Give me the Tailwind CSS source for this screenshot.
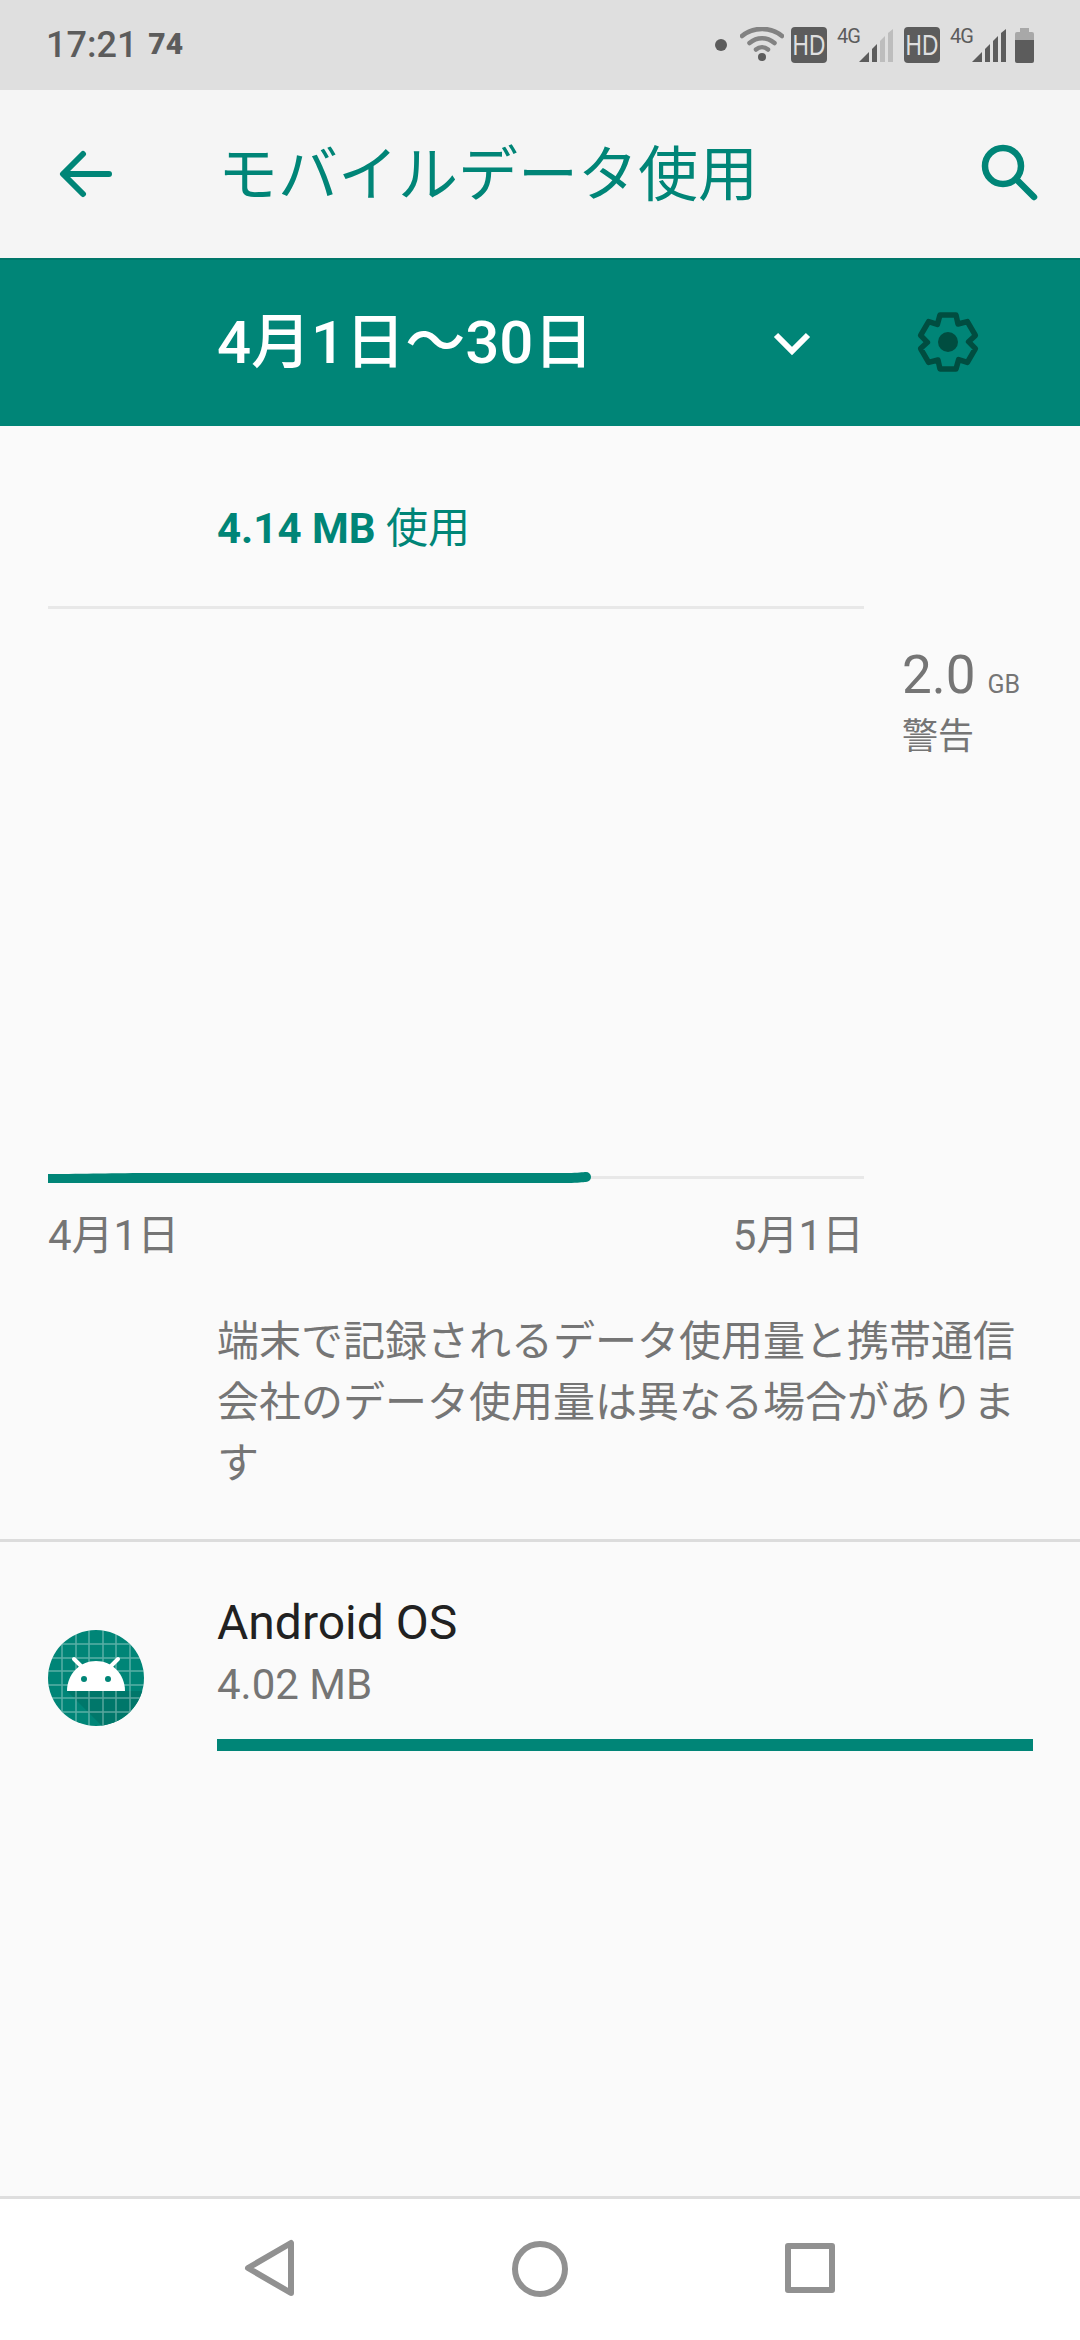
<!DOCTYPE html>
<html lang="ja"><head><meta charset="utf-8">
<script src="https://cdn.jsdelivr.net/npm/@tailwindcss/browser@4"></script>
</head>
<body class="m-0">
<div class="w-[1080px] h-[2340px] flex flex-col overflow-hidden bg-[#fafafa] font-['Roboto','Noto_Sans_CJK_JP',sans-serif]">
  <!-- status bar -->
  <div class="h-[90px] shrink-0 bg-[#dfdfdf] flex items-center pl-[46px] text-[#5c5c5c]">
    <span class="text-[36px] leading-none font-medium">17:21</span>
    <span class="ml-[11px] mt-[-2px] text-[30px] leading-none font-black">74</span>
    <div class="ml-auto mr-[46px] flex items-center h-[36px]">
      <svg width="12" height="12" viewBox="0 0 12 12" class="mr-[13px]"><circle cx="6" cy="6" r="6" fill="#5c5c5c"/></svg>
      <svg width="44" height="36" viewBox="0 0 44 36" class="mr-[7px]" fill="none" stroke="#828282" stroke-width="4.500" stroke-linecap="round"><path d="M2 9C13-.5 31-.5 42 9"/><path d="M9.500 16C17 9.500 27 9.500 34.500 16"/><path d="M16 22.500C19.500 19.500 24.500 19.500 28 22.500"/><circle cx="22" cy="30" r="4" fill="#5c5c5c" stroke="none"/></svg>
      <div class="w-[36px] h-[36px] rounded-[4px] bg-[#5c5c5c] text-[#dfdfdf] text-[29px] leading-[36px] flex justify-center overflow-hidden font-['Liberation_Sans',sans-serif]"><span class="inline-block scale-x-[0.78]">HD</span></div>
      <div class="self-start w-[22px] ml-[10px] text-[20px] leading-[20px] mt-[-1px] tracking-[-1px]">4G</div>
      <svg width="34" height="34" viewBox="0 0 34 34" class="mt-[1px]"><path d="M0 33 10 23V33Z" fill="#5c5c5c"/><path d="M13 20 18 15V33H13Z" fill="#5c5c5c"/><path d="M21 12 26 7V33H21Z" fill="#bdbdbd"/><path d="M29 4 34 0V33H29Z" fill="#bdbdbd"/></svg>
      <div class="ml-[11px] w-[36px] h-[36px] rounded-[4px] bg-[#5c5c5c] text-[#dfdfdf] text-[29px] leading-[36px] flex justify-center overflow-hidden font-['Liberation_Sans',sans-serif]"><span class="inline-block scale-x-[0.78]">HD</span></div>
      <div class="self-start w-[22px] ml-[10px] text-[20px] leading-[20px] mt-[-1px] tracking-[-1px]">4G</div>
      <svg width="34" height="34" viewBox="0 0 34 34" class="mt-[1px]"><path d="M0 33 10 23V33Z" fill="#5c5c5c"/><path d="M13 20 18 15V33H13Z" fill="#5c5c5c"/><path d="M21 12 26 7V33H21Z" fill="#5c5c5c"/><path d="M29 4 34 0V33H29Z" fill="#5c5c5c"/></svg>
      <svg width="19" height="35" viewBox="0 0 19 35" class="ml-[9px]"><path d="M5 0H14V4H17Q19 4 19 6V12H0V6Q0 4 2 4H5Z" fill="#a8a8a8"/><path d="M0 12H19V33Q19 35 17 35H2Q0 35 0 33Z" fill="#5c5c5c"/></svg>
    </div>
  </div>
  <!-- app bar -->
  <div class="h-[168px] shrink-0 bg-[#f5f5f5] flex items-center relative">
    <svg width="54" height="48" viewBox="0 0 54 48" class="ml-[59px]" fill="none" stroke="#008577" stroke-width="6" stroke-linecap="round" stroke-linejoin="round"><path d="M50 24H5"/><path d="M24 4 4 24 24 44"/></svg>
    <span class="ml-[105px] mt-[4px] text-[#008577] text-[60px] leading-none">モバイルデータ使用</span>
    <svg width="58" height="58" viewBox="0 0 58 58" class="ml-auto mr-[41px] mt-[-2px]" fill="none" stroke="#008577" stroke-width="6.500" stroke-linecap="round"><circle cx="22" cy="22" r="18"/><path d="M36 36 53 53"/></svg>
  </div>
  <!-- green period bar -->
  <div class="h-[168px] shrink-0 bg-[#008577] flex items-center relative border-t-2 border-[#00776a]">
    <span class="ml-[217px] text-white text-[60px] font-medium leading-none">4月1日〜30日</span>
    <svg width="38" height="24" viewBox="0 0 38 24" class="absolute left-[773px] top-[72px]" fill="none" stroke="#fff" stroke-width="6"><path d="M3 3 19 19 35 3"/></svg>
    <svg width="64" height="64" viewBox="-32 -32 64 64" class="absolute left-[916px] top-[50px]"><path d="M-8-27H8L10-18L19.380-20.430L27.380-6.570L20.590-.34L27.380 6.570L19.380 20.430L10.590 17.660L8 27H-8L-10 18L-19.380 20.430L-27.380 6.570L-20.590 .34L-27.380-6.570L-19.380-20.430L-10.590-17.660Z" fill="none" stroke="#004d40" stroke-width="5.500" stroke-linejoin="round"/><circle r="10" fill="#004d40"/></svg>
  </div>
  <!-- summary -->
  <div class="h-[180px] shrink-0 pl-[217px] pt-[80px] text-[#008577] text-[42px] leading-[46px]"><span class="font-bold">4.14 MB</span> <span>使用</span></div>
  <!-- chart -->
  <div class="h-[573px] shrink-0 flex pl-[48px] relative">
    <div class="w-[816px] border-y-[3px] border-[#e8e8e8]"></div>
    <div class="ml-[38px] pt-[40px] text-[#757575]">
      <div class="leading-[58px]"><span class="text-[53px]">2.0</span><span class="text-[25px] ml-[12px]">GB</span></div>
      <div class="text-[36px] leading-[44px] mt-[-2px]">警告</div>
    </div>
    <svg width="545" height="14" viewBox="0 0 545 14" class="absolute left-[48px] top-[564px]"><path d="M0 4C40 4 60 3 110 3H520C530 3 535 2 538 2A5 5 0 0 1 538 12C535 12 530 13 520 13H100C60 13 40 13 0 13Z" fill="#008577"/></svg>
  </div>
  <!-- date axis -->
  <div class="h-[94px] shrink-0 w-[864px] pl-[48px] flex justify-between items-center pt-[20px] text-[#757575] text-[42px] leading-none">
    <span>4月1日</span><span>5月1日</span>
  </div>
  <!-- note -->
  <div class="shrink-0 pl-[217px] pr-[40px] pt-[38px] text-[#757575] text-[42px] leading-[61px] h-[269px] border-b-[3px] border-[#dcdcdc]">端末で記録されるデータ使用量と携帯通信会社のデータ使用量は異なる場合がありま<br>す</div>
  <!-- app row -->
  <div class="flex-1 flex pl-[48px] pt-[53px]">
    <svg width="96" height="96" viewBox="0 0 96 96" class="mt-[35px] shrink-0">
      <defs><clipPath id="c"><circle cx="48" cy="48" r="48"/></clipPath></defs>
      <circle cx="48" cy="48" r="48" fill="#008577"/>
      <g clip-path="url(#c)">
        <path d="M19 61 L56 98 L100 98 L100 61 Z" fill="#00776a"/>
        <path d="M14 0V96M28 0V96M41 0V96M55 0V96M68 0V96M82 0V96M0 14H96M0 28H96M0 41H96M0 55H96M0 68H96M0 82H96" stroke="#fff" stroke-opacity=".35" stroke-width="1.500"/>
      </g>
      <path d="M19 61C19 44 32 31 48 31S77 44 77 61Z" fill="#fff"/>
      <path d="M26 29 35 38M70 29 61 38" stroke="#fff" stroke-width="4" stroke-linecap="round"/>
      <circle cx="36" cy="49" r="3" fill="#008577"/><circle cx="60" cy="49" r="3" fill="#008577"/>
    </svg>
    <div class="ml-[73px] w-[816px]">
      <div class="text-[#212121] text-[48px] leading-[56px] h-[56px]">Android OS</div>
      <div class="text-[#757575] text-[42px] leading-[48px] mt-[10px]">4.02 MB</div>
      <div class="h-[12px] bg-[#008577] mt-[30px]"></div>
    </div>
  </div>
  <!-- nav bar -->
  <div class="h-[144px] shrink-0 bg-white border-t-[3px] border-[#dedede] relative">
    <svg width="52" height="58" viewBox="0 0 52 58" class="absolute left-[244px] top-[40px]" fill="none" stroke="#919191" stroke-width="6" stroke-linejoin="round"><path d="M47 4V54L4 29Z"/></svg>
    <svg width="58" height="58" viewBox="0 0 58 58" class="absolute left-[511px] top-[41px]" fill="none" stroke="#919191" stroke-width="6"><circle cx="29" cy="29" r="25"/></svg>
    <svg width="50" height="50" viewBox="0 0 50 50" class="absolute left-[785px] top-[44px]" fill="none" stroke="#919191" stroke-width="6" stroke-linejoin="round"><path d="M3 3H47V47H3Z"/></svg>
  </div>
</div>
</body></html>
